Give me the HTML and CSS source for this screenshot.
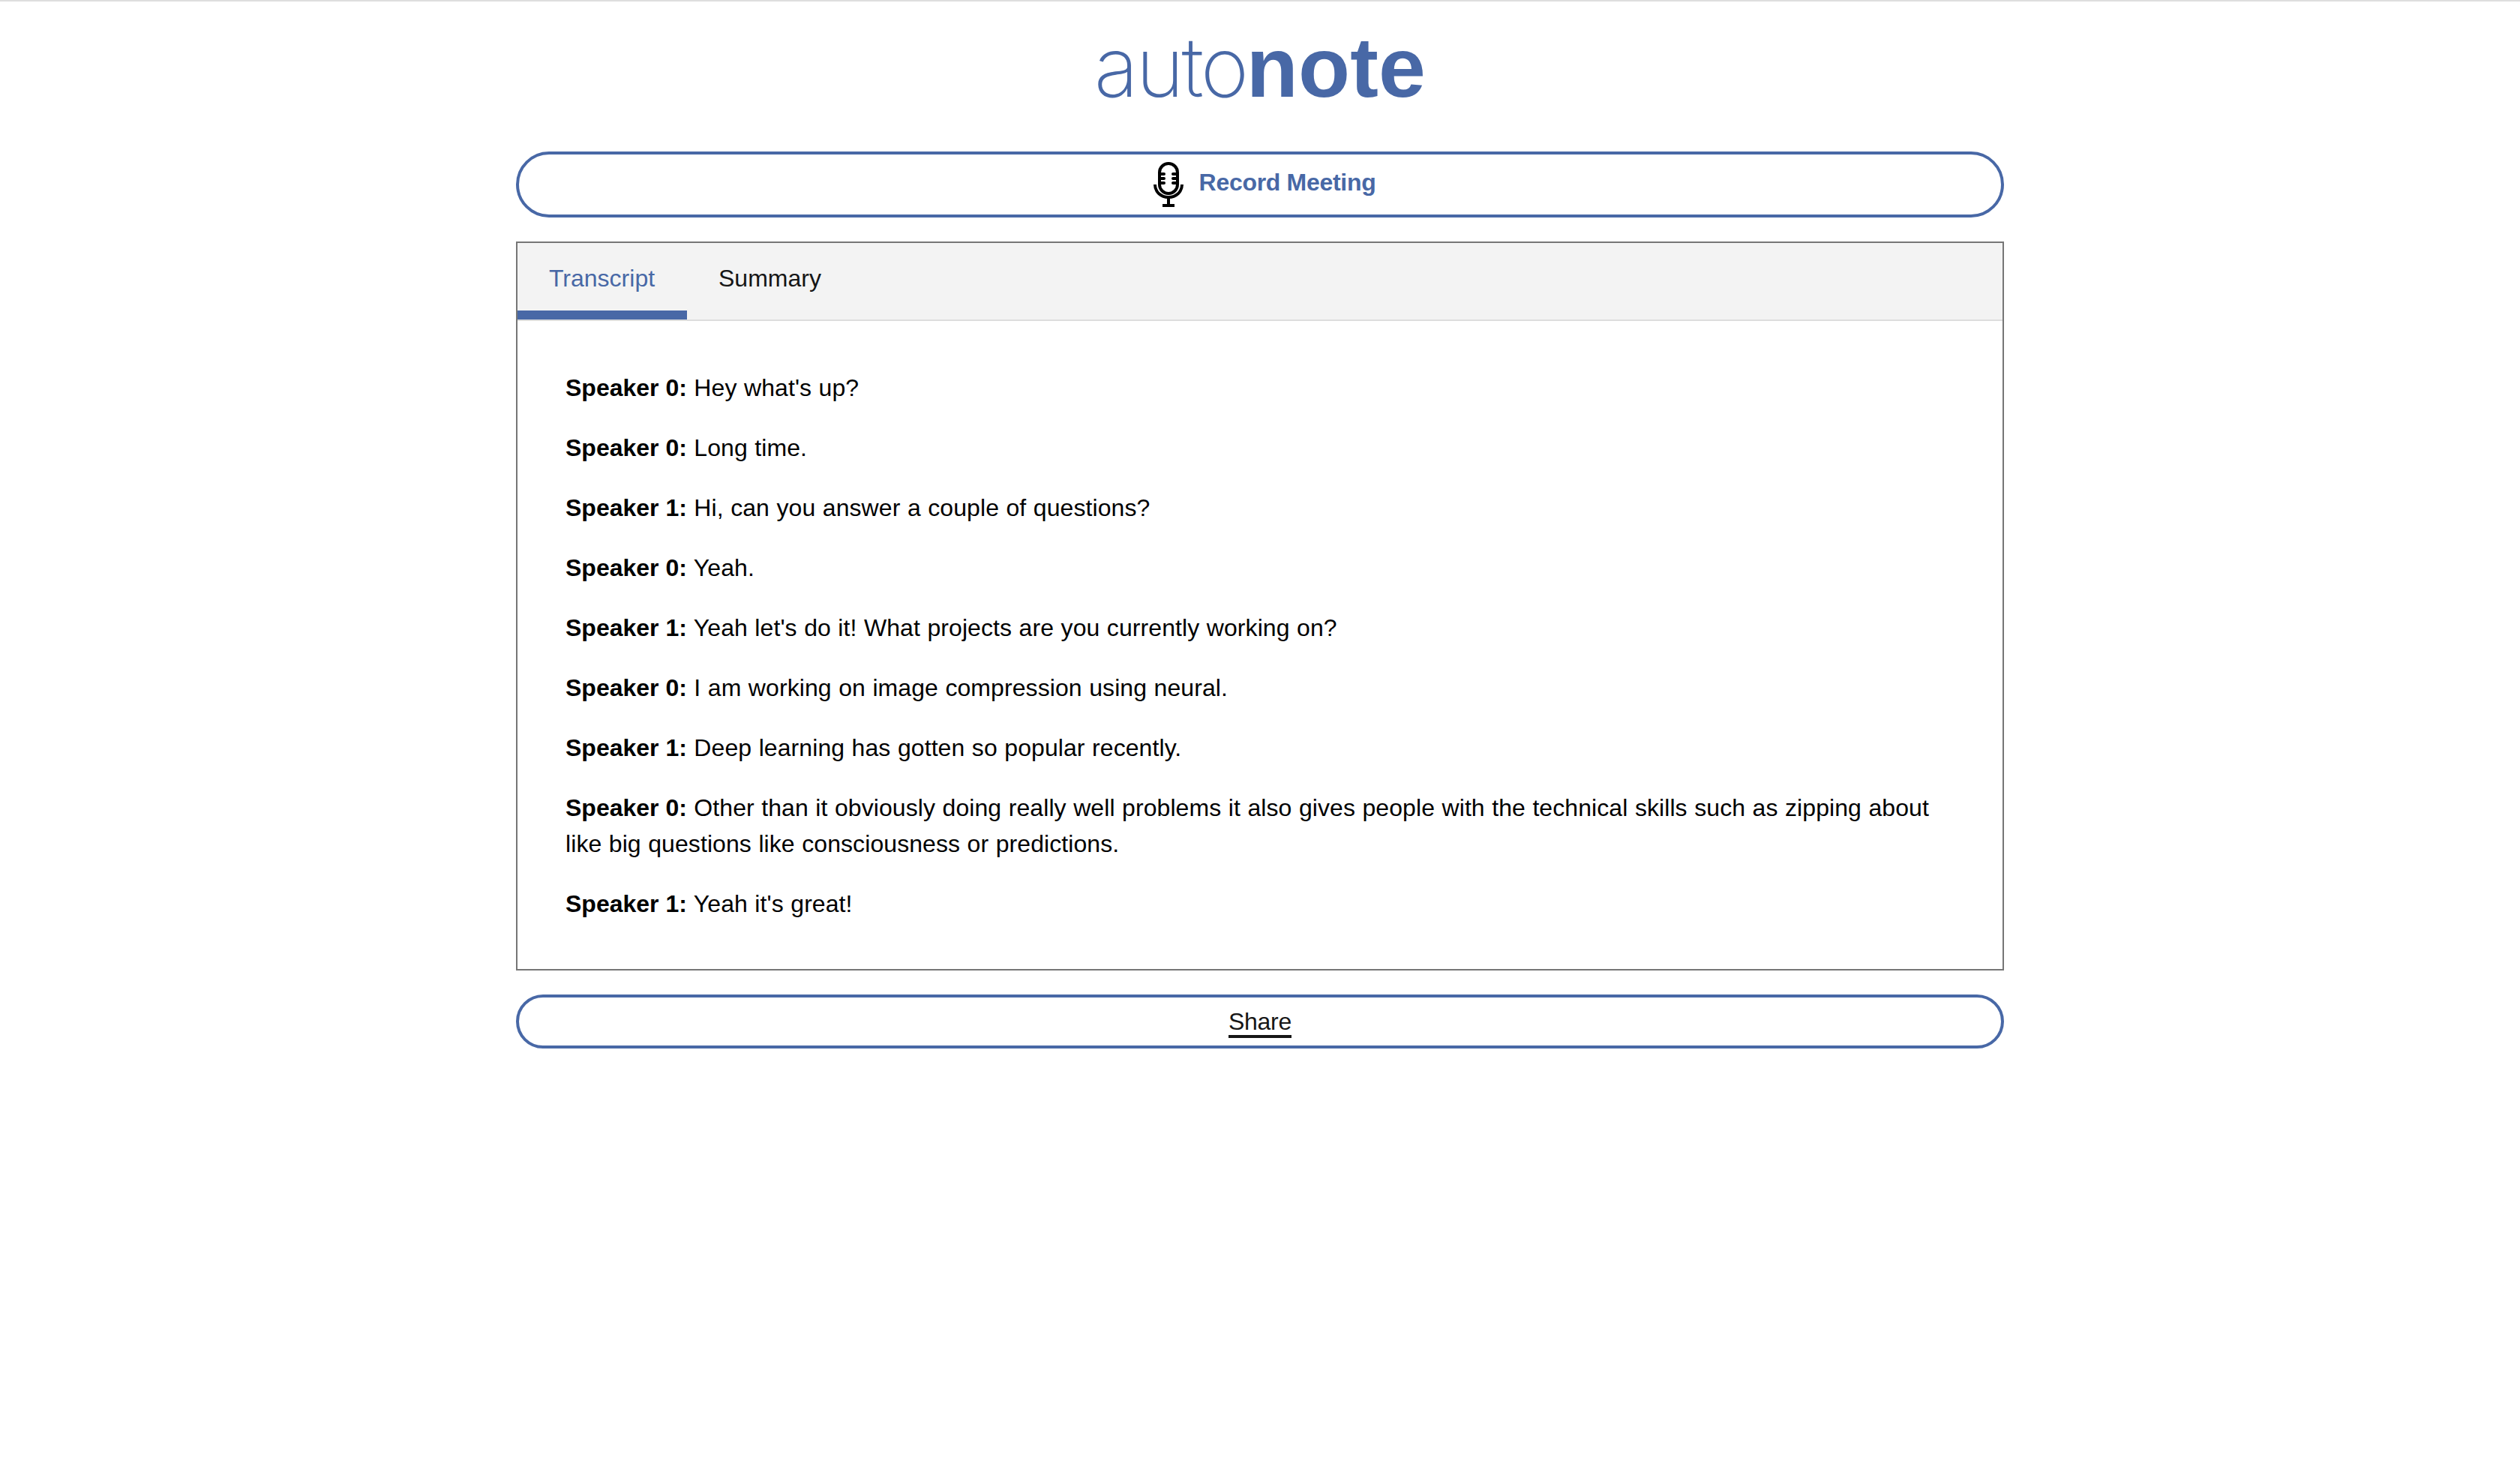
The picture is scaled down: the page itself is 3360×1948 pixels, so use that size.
FILE: index.html
```html
<!DOCTYPE html>
<html lang="en">
<head>
    <meta charset="UTF-8">
    <meta name="viewport" content="width=device-width, initial-scale=1.0">
    <title>autonote</title>
    <link rel="stylesheet" href="styles.css">
</head>
<body>
    <div class="container">
        <h1 class="logo"><span class="logo-auto">auto</span><span class="logo-note">note</span></h1>

        <button class="record-button">
            <svg class="mic-icon" viewBox="0 0 40 60">
                <rect x="8" y="2" width="24" height="40" rx="12" />
                <path d="M10 16h4M10 22h4M10 28h4M30 16h-4M30 22h-4M30 28h-4" stroke-linecap="round" />
                <path d="M2 30c0 10 8 17 18 17s18-7 18-17" />
                <path d="M20 47v10M12 58h16" />
            </svg>
            <span>Record Meeting</span>
        </button>

        <div class="card">
            <div class="tabs">
                <a class="tab active">Transcript</a>
                <a class="tab">Summary</a>
            </div>
            <div class="transcript">
                <p><b>Speaker 0:</b> Hey what's up?</p>
                <p><b>Speaker 0:</b> Long time.</p>
                <p><b>Speaker 1:</b> Hi, can you answer a couple of questions?</p>
                <p><b>Speaker 0:</b> Yeah.</p>
                <p><b>Speaker 1:</b> Yeah let's do it! What projects are you currently working on?</p>
                <p><b>Speaker 0:</b> I am working on image compression using neural.</p>
                <p><b>Speaker 1:</b> Deep learning has gotten so popular recently.</p>
                <p><b>Speaker 0:</b> Other than it obviously doing really well problems it also gives people with the technical skills such as zipping about like big questions like consciousness or predictions.</p>
                <p><b>Speaker 1:</b> Yeah it's great!</p>
            </div>
        </div>

        <button class="share-button"><span>Share</span></button>
    </div>
</body>
</html>
```
FILE: styles.css
```css
* {
    box-sizing: border-box;
}
body {
    margin: 0;
    border-top: 2px solid #dedede;
    background-color: #fff;
    color: #000;
    font-family: "Helvetica Neue", "Liberation Sans", Arial, sans-serif;
    font-size: 32px;
    line-height: 48px;
}
.container {
    width: 1984px;
    margin: 0 auto;
}
.logo {
    display: flex;
    justify-content: center;
    align-items: baseline;
    height: 200px;
    margin: 0;
    padding-top: 23px;
    color: #4868a6;
    font-size: 113px;
    line-height: 128px;
}
.logo-auto {
    font-family: Inter, sans-serif;
    font-size: 110px;
    font-weight: 200;
    letter-spacing: -3.5px;
}
.logo-note {
    font-weight: bold;
    letter-spacing: 0.2px;
}
.record-button,
.share-button {
    display: flex;
    justify-content: center;
    align-items: center;
    width: 100%;
    border: 4px solid #4868a6;
    border-radius: 44px;
    background-color: #fff;
    font-family: inherit;
    font-size: 32px;
    line-height: 48px;
}
.record-button {
    gap: 21px;
    height: 88px;
    padding: 0 0 6px 12px;
    color: #4868a6;
    font-weight: bold;
    letter-spacing: -0.3px;
}
.mic-icon {
    width: 40px;
    height: 60px;
    margin-top: 6px;
    fill: none;
    stroke: #000;
    stroke-width: 4;
}
.card {
    margin: 32px 0;
    border: 2px solid #767676;
}
.tabs {
    display: flex;
    height: 104px;
    border-bottom: 2px solid #ddd;
    background-color: #f3f3f3;
}
.tab {
    padding: 23px 42px 0;
    color: #161616;
}
.tab.active {
    width: 226px;
    border-bottom: 12px solid #4868a6;
    color: #4868a6;
}
.transcript {
    padding: 33px 64px 31px;
}
.transcript p {
    margin: 32px 0;
    letter-spacing: 0.08px;
    word-spacing: 0.5px;
}
.transcript b {
    letter-spacing: 0;
    word-spacing: 0;
}
.share-button {
    height: 72px;
    padding: 2px 0 0;
    color: #161616;
    letter-spacing: -0.3px;
}
.share-button span {
    height: 42px;
    border-bottom: 4px solid #161616;
    line-height: 40px;
}
```
